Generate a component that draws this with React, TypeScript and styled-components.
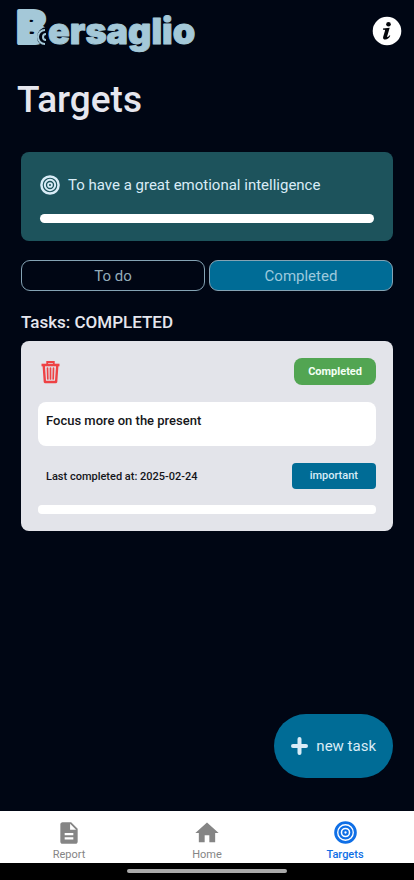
import React, { useState } from "react";
import styled, { createGlobalStyle } from "styled-components";
import { MdDescription, MdHome } from "react-icons/md";

const GlobalStyle = createGlobalStyle`
  *, *::before, *::after { box-sizing: border-box; }
  body { margin: 0; background: #000614; font-family: Roboto, "Liberation Sans", sans-serif; }
  button { font-family: inherit; cursor: pointer; }
  h1, h2, p { margin: 0; }
  svg { display: block; }
`;

const Screen = styled.div`
  min-height: 100vh;
  display: flex;
  flex-direction: column;
  background: #000614;
`;

const Header = styled.header`
  display: flex;
  align-items: flex-start;
  justify-content: space-between;
  padding: 0 12px 0 16px;
`;

const InfoButton = styled.button`
  margin-top: 16px;
  padding: 0;
  border: 0;
  border-radius: 50%;
  background: none;
`;

const Title = styled.h1`
  padding: 20px 17px 0;
  color: #e6e6ee;
  font-size: 37px;
  line-height: 48px;
  font-weight: 500;
`;

const Content = styled.main`
  flex: 1;
  display: flex;
  flex-direction: column;
  padding: 28px 21px 0;
`;

const GoalCard = styled.section`
  padding: 21px 19px 18px;
  border-radius: 8px;
  background: #1d535c;
  color: #d9ecf7;
`;

const GoalRow = styled.div`
  display: flex;
  align-items: center;
  gap: 8px;
  margin-bottom: 17px;
  font-size: 15px;
  line-height: 24px;
`;

const Progress = styled.div<{ $radius: number }>`
  height: 9px;
  border-radius: ${(p) => p.$radius}px;
  background: #fff;
`;

const Tabs = styled.div`
  display: grid;
  grid-template-columns: 1fr 1fr;
  gap: 4px;
  margin-top: 19px;
`;

const Tab = styled.button<{ $active: boolean }>`
  height: 31px;
  padding: 0;
  border: 1px solid #84a3b4;
  border-radius: 9px;
  background: ${(p) => (p.$active ? "#006c96" : "transparent")};
  color: ${(p) => (p.$active ? "#9cc9dd" : "#93acb9")};
  font-size: 15px;
`;

const ListHeading = styled.h2`
  margin: 20px 0 8px;
  color: #e6e6ee;
  font-size: 17px;
  line-height: 22px;
  font-weight: 500;
`;

const TaskCard = styled.article`
  padding: 17px;
  border-radius: 8px;
  background: #e3e4ea;
  color: #15161a;
`;

const TaskRow = styled.div`
  display: flex;
  align-items: center;
  justify-content: space-between;
`;

const IconButton = styled.button`
  padding: 0 3px;
  border: 0;
  background: none;
`;

const Status = styled.span`
  padding: 0 14px;
  border-radius: 8px;
  background: #52a552;
  color: #f4fff4;
  font-size: 11px;
  line-height: 27px;
  font-weight: 700;
`;

const TaskText = styled.p`
  min-height: 44px;
  margin: 17px 0;
  padding: 9px 8px;
  border-radius: 8px;
  background: #fff;
  font-size: 13px;
  line-height: 20px;
  font-weight: 500;
`;

const TaskDate = styled.span`
  padding-left: 8px;
  font-size: 11px;
  font-weight: 500;
`;

const Priority = styled.span`
  padding: 0 18px;
  border-radius: 4px;
  background: #006c96;
  color: #d8edf7;
  font-size: 11px;
  line-height: 26px;
  font-weight: 500;
`;

const TaskProgress = styled(Progress)`
  margin-top: 16px;
`;

const NewTask = styled.button`
  position: fixed;
  right: 21px;
  bottom: 102px;
  display: flex;
  align-items: center;
  gap: 8px;
  height: 64px;
  padding: 0 17px;
  border: 0;
  border-radius: 32px;
  background: #006c96;
  color: #d9ecf7;
  font-size: 15px;
`;

const BottomNav = styled.nav`
  position: sticky;
  bottom: 0;
  background: #000;
`;

const NavItems = styled.div`
  display: grid;
  grid-template-columns: repeat(3, 1fr);
  background: #fff;
`;

const NavLink = styled.a<{ $active?: boolean }>`
  display: flex;
  flex-direction: column;
  align-items: center;
  height: 52px;
  padding-top: 7px;
  color: ${(p) => (p.$active ? "#0f6fe6" : "#858585")};
  font-size: 11px;
  line-height: 16px;
  font-weight: ${(p) => (p.$active ? 500 : 400)};
  text-decoration: none;
`;

const NavIcon = styled.span`
  display: grid;
  place-items: center;
  height: 29px;
`;

const HomeHandle = styled.div`
  width: 160px;
  height: 4px;
  margin: 6px auto 7px;
  border-radius: 2px;
  background: #aaa;
`;

function Logo() {
  return (
    <svg width="184" height="56" viewBox="0 -8 184 56" role="img" aria-label="Bersaglio">
      <g fill="#a4c8d8" stroke="#a4c8d8" strokeLinejoin="round" fontFamily="Inter, sans-serif" fontWeight="900">
        <text x="1" y="35" fontSize="44" strokeWidth="4">B</text>
        <circle cx="31" cy="29" r="10" fill="#000614" stroke="none" />
        <text x="32" y="36" fontSize="36" strokeWidth="1">ersaglio</text>
      </g>
      <g fill="none" stroke="#a4c8d8" strokeWidth="2">
        <path d="M29 22a7 7 0 0 0 0 14" />
        <path d="M30 26a3 3 0 0 0 0 6" />
      </g>
    </svg>
  );
}

function InfoIcon() {
  return (
    <svg width="30" height="30" viewBox="0 0 30 30" aria-hidden="true">
      <circle cx="15" cy="15" r="14.3" fill="#fff" />
      <circle cx="16.5" cy="8.3" r="2.3" fill="#05070c" />
      <path d="M11 12.6 17.7 11.8 15.2 20.3q-.2 1 .6.6 1-.5 1.8-1.7l.7.5q-2 3.8-4.9 3.8-3 0-2.2-2.8l1.8-6q.3-1-.7-1h-1.3Z" fill="#05070c" />
    </svg>
  );
}

function TargetIcon({ size }: { size: number }) {
  return (
    <svg width={size} height={size} viewBox="0 0 24 24" fill="none" stroke="currentColor" aria-hidden="true">
      <circle cx="12" cy="12" r="10.3" strokeWidth="3" />
      <circle cx="12" cy="12" r="6.2" strokeWidth="2.4" />
      <circle cx="12" cy="12" r="2.3" strokeWidth="2.2" />
    </svg>
  );
}

function TrashIcon() {
  return (
    <svg width="19" height="24" viewBox="0 0 19 24" fill="none" stroke="#ee4245" aria-hidden="true">
      <path d="M.5 5h18" strokeWidth="2.6" />
      <path d="M6.2 4.5V2h6.6v2.5" strokeWidth="1.8" />
      <path d="m2.7 5 1.2 17h11.2l1.2-17" strokeWidth="2.4" strokeLinejoin="round" />
      <path d="m6.5 8 .3 11M9.5 8v11M12.5 8l-.3 11" strokeWidth="1.7" strokeLinecap="round" />
    </svg>
  );
}

function PlusIcon() {
  return (
    <svg width="17" height="18" viewBox="0 0 17 18" aria-hidden="true">
      <path d="M8.5 2v14M2 9h13" stroke="currentColor" strokeWidth="4" strokeLinecap="round" />
    </svg>
  );
}

export default function App() {
  const [tab, setTab] = useState<"todo" | "completed">("completed");

  return (
    <>
      <GlobalStyle />
      <Screen>
        <Header>
          <Logo />
          <InfoButton aria-label="Information"><InfoIcon /></InfoButton>
        </Header>
        <Title>Targets</Title>
        <Content>
          <GoalCard>
            <GoalRow>
              <TargetIcon size={20} />
              <span>To have a great emotional intelligence</span>
            </GoalRow>
            <Progress $radius={5} />
          </GoalCard>
          <Tabs>
            <Tab $active={tab === "todo"} onClick={() => setTab("todo")}>To do</Tab>
            <Tab $active={tab === "completed"} onClick={() => setTab("completed")}>Completed</Tab>
          </Tabs>
          <ListHeading>Tasks: {tab === "todo" ? "TO DO" : "COMPLETED"}</ListHeading>
          {tab === "completed" && (
            <TaskCard>
              <TaskRow>
                <IconButton aria-label="Delete task"><TrashIcon /></IconButton>
                <Status>Completed</Status>
              </TaskRow>
              <TaskText>Focus more on the present</TaskText>
              <TaskRow>
                <TaskDate>Last completed at: 2025-02-24</TaskDate>
                <Priority>important</Priority>
              </TaskRow>
              <TaskProgress $radius={4} />
            </TaskCard>
          )}
        </Content>
        <NewTask>
          <PlusIcon />
          <span>new task</span>
        </NewTask>
        <BottomNav>
          <NavItems>
            <NavLink href="#report">
              <NavIcon><MdDescription size={26} /></NavIcon>
              Report
            </NavLink>
            <NavLink href="#home">
              <NavIcon><MdHome size={28} /></NavIcon>
              Home
            </NavLink>
            <NavLink href="#targets" $active aria-current="page">
              <NavIcon><TargetIcon size={23} /></NavIcon>
              Targets
            </NavLink>
          </NavItems>
          <HomeHandle />
        </BottomNav>
      </Screen>
    </>
  );
}
